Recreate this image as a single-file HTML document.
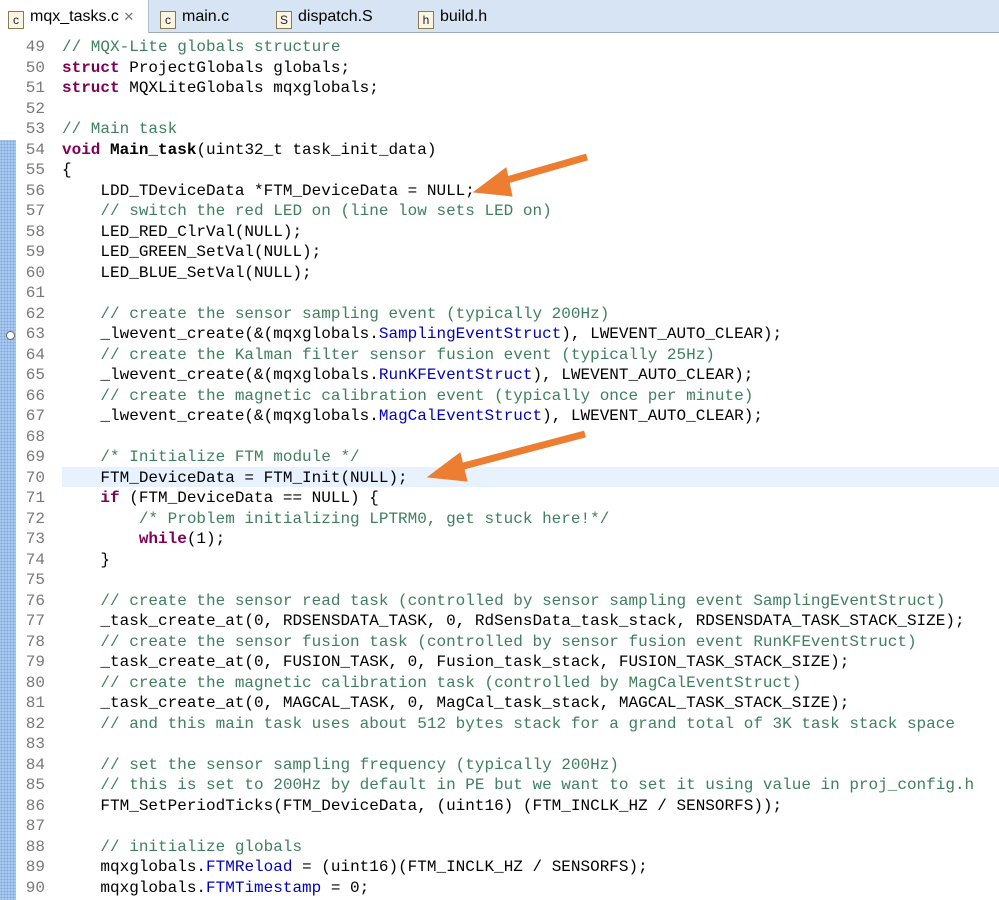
<!DOCTYPE html>
<html><head><meta charset="utf-8"><style>
body{margin:0;width:999px;height:900px;overflow:hidden;background:#fff;position:relative;font-family:"Liberation Mono",monospace;}
.tabs{position:absolute;left:0;top:0;width:999px;height:32px;background:#d6e4f3;border-bottom:1px solid #9aaabb;font-family:"Liberation Sans",sans-serif;font-size:16px;color:#000;}
.tab{position:absolute;top:0;height:32px;line-height:34px;}
.tab.active{background:#fff;left:0;width:148px;border-right:1px solid #b0c0d0;height:33px;}
.ic{display:inline-block;width:14px;height:16px;border:1px solid #8a7a50;background:#fbf6e4;font-size:12px;line-height:16px;text-align:center;vertical-align:-3px;margin-right:6px;color:#223;}
.ruler{position:absolute;left:0;top:140px;width:16px;height:760px;background:#a9c9ef;background-image:radial-gradient(#7fa8de 0.8px,transparent 1px);background-size:3px 3px;}
.code{position:absolute;left:0;top:37px;font-size:16px;line-height:20.5px;white-space:pre;}
.ln{display:inline-block;width:45px;text-align:right;color:#787878;margin-right:17px;}
.c{color:#3f7f5f}.k{color:#7f0055;font-weight:bold}.f{color:#0000c0}
.hl{position:absolute;left:62px;top:467px;width:937px;height:20px;background:#e8f2fe;}
</style></head><body>
<div class="tabs">
<div class="tab active"><span style="margin-left:8px" class="ic">c</span>mqx_tasks.c <span style="color:#777;font-size:13px">✕</span></div>
<div class="tab" style="left:160px"><span class="ic">c</span>main.c</div>
<div class="tab" style="left:276px"><span class="ic">S</span>dispatch.S</div>
<div class="tab" style="left:418px"><span class="ic">h</span>build.h</div>
</div>
<div class="ruler"></div>
<div style="position:absolute;left:6px;top:331px;width:7px;height:7px;border:1px solid #666;border-radius:50%;background:#fff"></div>
<div class="hl"></div>
<div class="code"><span class="ln">49</span><span class="c">// MQX-Lite globals structure</span>
<span class="ln">50</span><span class="k">struct</span> ProjectGlobals globals;
<span class="ln">51</span><span class="k">struct</span> MQXLiteGlobals mqxglobals;
<span class="ln">52</span>
<span class="ln">53</span><span class="c">// Main task</span>
<span class="ln">54</span><span class="k">void</span> <b>Main_task</b>(uint32_t task_init_data)
<span class="ln">55</span>{
<span class="ln">56</span>    LDD_TDeviceData *FTM_DeviceData = NULL;
<span class="ln">57</span>    <span class="c">// switch the red LED on (line low sets LED on)</span>
<span class="ln">58</span>    LED_RED_ClrVal(NULL);
<span class="ln">59</span>    LED_GREEN_SetVal(NULL);
<span class="ln">60</span>    LED_BLUE_SetVal(NULL);
<span class="ln">61</span>
<span class="ln">62</span>    <span class="c">// create the sensor sampling event (typically 200Hz)</span>
<span class="ln">63</span>    _lwevent_create(&amp;(mqxglobals.<span class="f">SamplingEventStruct</span>), LWEVENT_AUTO_CLEAR);
<span class="ln">64</span>    <span class="c">// create the Kalman filter sensor fusion event (typically 25Hz)</span>
<span class="ln">65</span>    _lwevent_create(&amp;(mqxglobals.<span class="f">RunKFEventStruct</span>), LWEVENT_AUTO_CLEAR);
<span class="ln">66</span>    <span class="c">// create the magnetic calibration event (typically once per minute)</span>
<span class="ln">67</span>    _lwevent_create(&amp;(mqxglobals.<span class="f">MagCalEventStruct</span>), LWEVENT_AUTO_CLEAR);
<span class="ln">68</span>
<span class="ln">69</span>    <span class="c">/* Initialize FTM module */</span>
<span class="ln">70</span>    FTM_DeviceData = FTM_Init(NULL);
<span class="ln">71</span>    <span class="k">if</span> (FTM_DeviceData == NULL) {
<span class="ln">72</span>        <span class="c">/* Problem initializing LPTRM0, get stuck here!*/</span>
<span class="ln">73</span>        <span class="k">while</span>(1);
<span class="ln">74</span>    }
<span class="ln">75</span>
<span class="ln">76</span>    <span class="c">// create the sensor read task (controlled by sensor sampling event SamplingEventStruct)</span>
<span class="ln">77</span>    _task_create_at(0, RDSENSDATA_TASK, 0, RdSensData_task_stack, RDSENSDATA_TASK_STACK_SIZE);
<span class="ln">78</span>    <span class="c">// create the sensor fusion task (controlled by sensor fusion event RunKFEventStruct)</span>
<span class="ln">79</span>    _task_create_at(0, FUSION_TASK, 0, Fusion_task_stack, FUSION_TASK_STACK_SIZE);
<span class="ln">80</span>    <span class="c">// create the magnetic calibration task (controlled by MagCalEventStruct)</span>
<span class="ln">81</span>    _task_create_at(0, MAGCAL_TASK, 0, MagCal_task_stack, MAGCAL_TASK_STACK_SIZE);
<span class="ln">82</span>    <span class="c">// and this main task uses about 512 bytes stack for a grand total of 3K task stack space</span>
<span class="ln">83</span>
<span class="ln">84</span>    <span class="c">// set the sensor sampling frequency (typically 200Hz)</span>
<span class="ln">85</span>    <span class="c">// this is set to 200Hz by default in PE but we want to set it using value in proj_config.h</span>
<span class="ln">86</span>    FTM_SetPeriodTicks(FTM_DeviceData, (uint16) (FTM_INCLK_HZ / SENSORFS));
<span class="ln">87</span>
<span class="ln">88</span>    <span class="c">// initialize globals</span>
<span class="ln">89</span>    mqxglobals.<span class="f">FTMReload</span> = (uint16)(FTM_INCLK_HZ / SENSORFS);
<span class="ln">90</span>    mqxglobals.<span class="f">FTMTimestamp</span> = 0;
</div>
<svg style="position:absolute;left:0;top:0" width="999" height="900">
<g fill="#ed7d31" stroke="#ed7d31">
<line x1="587" y1="157" x2="500" y2="182" stroke-width="7"/>
<polygon points="474,192 506,168 512,196" stroke-width="1"/>
<line x1="585" y1="434" x2="456" y2="468" stroke-width="7"/>
<polygon points="428,477 460,453 467,481" stroke-width="1"/>
</g></svg>
</body></html>
